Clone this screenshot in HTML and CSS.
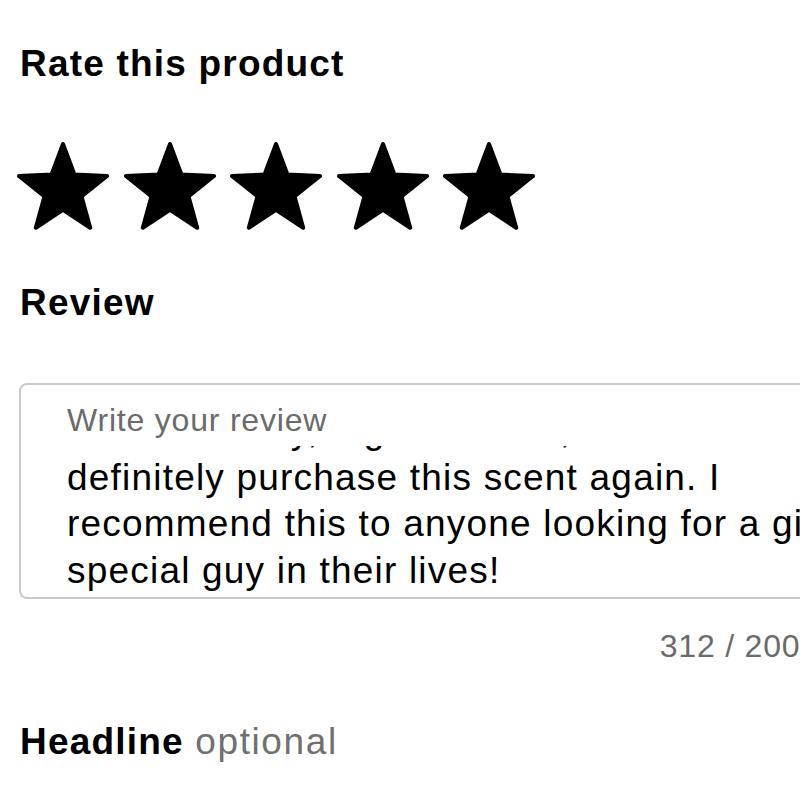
FILE: index.html
```html
<!DOCTYPE html>
<html lang="en">
<head>
<meta charset="utf-8">
<title>Rate this product</title>
<link rel="stylesheet" href="styles.css">
</head>
<body>
<main class="page">
  <h2 class="title title-rate">Rate this product</h2>
  <div class="stars" role="radiogroup" aria-label="Rating">
    <svg class="star" viewBox="0 0 92 88" aria-hidden="true"><path d="M46 2 L57.43 32.57 L90.04 33.99 L64.5 54.31 L73.21 85.76 L46 67.75 L18.79 85.76 L27.5 54.31 L1.96 33.99 L34.57 32.57 Z"/></svg>
    <svg class="star" viewBox="0 0 92 88" aria-hidden="true"><path d="M46 2 L57.43 32.57 L90.04 33.99 L64.5 54.31 L73.21 85.76 L46 67.75 L18.79 85.76 L27.5 54.31 L1.96 33.99 L34.57 32.57 Z"/></svg>
    <svg class="star" viewBox="0 0 92 88" aria-hidden="true"><path d="M46 2 L57.43 32.57 L90.04 33.99 L64.5 54.31 L73.21 85.76 L46 67.75 L18.79 85.76 L27.5 54.31 L1.96 33.99 L34.57 32.57 Z"/></svg>
    <svg class="star" viewBox="0 0 92 88" aria-hidden="true"><path d="M46 2 L57.43 32.57 L90.04 33.99 L64.5 54.31 L73.21 85.76 L46 67.75 L18.79 85.76 L27.5 54.31 L1.96 33.99 L34.57 32.57 Z"/></svg>
    <svg class="star" viewBox="0 0 92 88" aria-hidden="true"><path d="M46 2 L57.43 32.57 L90.04 33.99 L64.5 54.31 L73.21 85.76 L46 67.75 L18.79 85.76 L27.5 54.31 L1.96 33.99 L34.57 32.57 Z"/></svg>
  </div>

  <h2 class="title title-review">Review</h2>
  <div class="field">
    <div class="field-label">Write your review</div>
    <div class="field-scroll">
      <div class="field-text">It lasts all day, a great scent, and I will<br>definitely purchase this scent again. I<br>recommend this to anyone looking for a gift for the<br>special guy in their lives!</div>
    </div>
  </div>
  <div class="counter">312 / 2000</div>

  <h2 class="title title-headline">Headline <span class="optional">optional</span></h2>
</main>
</body>
</html>
```
FILE: styles.css
```css
html, body {
  margin: 0;
  padding: 0;
  background: #ffffff;
  overflow: hidden;
}

body {
  font-family: "Liberation Sans", Arial, Helvetica, sans-serif;
  color: #000000;
}

.page {
  width: 799px;
  padding: 42px 0 0 20px;
  display: flex;
  flex-direction: column;
}

.title {
  margin: 0;
  font-size: 37px;
  line-height: 44px;
  font-weight: 700;
  letter-spacing: 1.2px;
}

.stars {
  display: flex;
  gap: 14.5px;
  margin: 56px 0 0 -3px;
  height: 88px;
}

.star {
  width: 92px;
  height: 88px;
  display: block;
}

.star path {
  fill: #000;
  stroke: #000;
  stroke-width: 4;
  stroke-linejoin: round;
}

.title-review {
  margin-top: 51px;
}

.field {
  margin-top: 58px;
  margin-left: -1px;
  border: 2px solid #c9c9c9;
  border-radius: 8px;
  padding: 15px 0 3px 46px;
  display: flex;
  flex-direction: column;
}

.field-label {
  font-size: 32px;
  line-height: 40px;
  letter-spacing: 0.8px;
  color: #6b6b6b;
}

.field-scroll {
  margin-top: 6px;
  height: 148px;
  overflow: hidden;
  display: flex;
  flex-direction: column;
  justify-content: flex-end;
}

.field-text {
  flex: none;
  font-size: 37px;
  line-height: 46.5px;
  letter-spacing: 1.2px;
  white-space: nowrap;
  color: #000;
}

.counter {
  margin-top: 27px;
  align-self: flex-end;
  font-size: 32px;
  line-height: 40px;
  letter-spacing: 0.8px;
  color: #6b6b6b;
  white-space: nowrap;
}

.title-headline {
  margin-top: 54px;
}

.optional {
  font-weight: 400;
  letter-spacing: 1.6px;
  color: #707070;
}
```
